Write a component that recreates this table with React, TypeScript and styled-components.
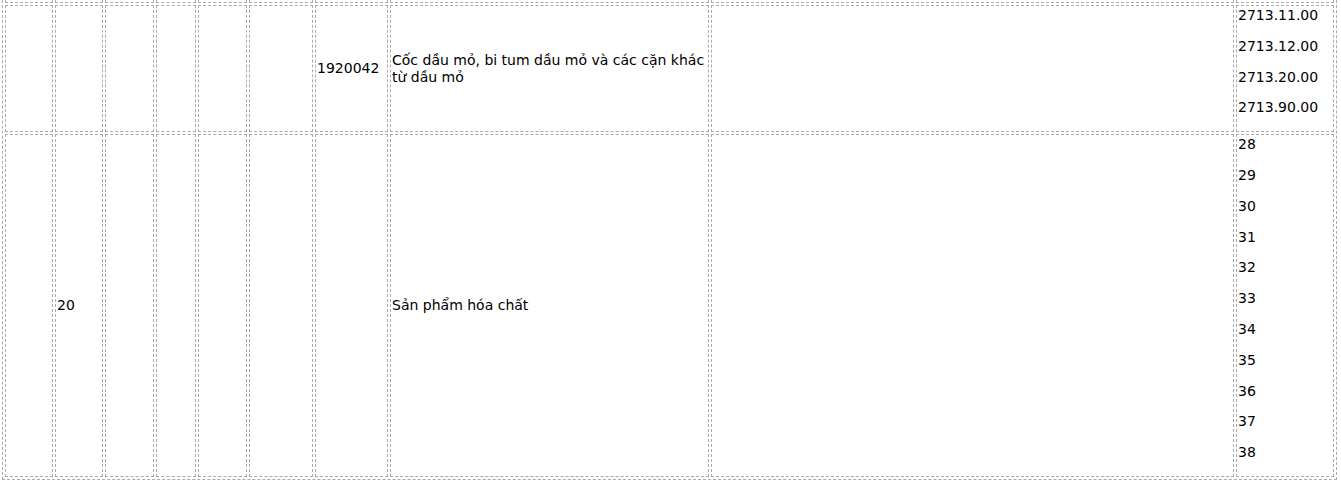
import React from "react";
import styled, { createGlobalStyle } from "styled-components";

const GlobalStyle = createGlobalStyle`
  html, body {
    margin: 0;
    padding: 0;
    background: #ffffff;
  }
  body {
    font-family: "DejaVu Sans", Verdana, sans-serif;
    font-size: 14px;
    color: #000000;
    overflow: hidden;
  }
`;

const Page = styled.div`
  padding-left: 2px;
`;

const Table = styled.table`
  width: 1335px;
  box-sizing: border-box;
  table-layout: fixed;
  border-collapse: separate;
  border-spacing: 2px;
  border: 1px dashed #aaaaaa;
  margin-top: -20px;
`;

const Col = styled.col<{ $w: number }>`
  width: ${(p) => p.$w}px;
`;

const Row = styled.tr``;

const Cell = styled.td<{ $spacer?: boolean }>`
  border: 1px dashed #aaaaaa;
  padding: 1px;
  vertical-align: middle;
  line-height: 17px;
  height: ${(p) => (p.$spacer ? "20px" : "auto")};
  box-sizing: border-box;
  overflow-wrap: break-word;
`;

const CodeItem = styled.p`
  margin: 0 0 13.8px 0;
  line-height: 17px;
`;

const widths = [48, 48, 49, 40, 49, 64, 73, 319, 523, 98];

type RowData = {
  cells: (string | null)[];
  codes: string[];
};

const rows: RowData[] = [
  {
    cells: [null, null, null, null, null, null, "1920042", "Cốc dầu mỏ, bi tum dầu mỏ và các cặn khác từ dầu mỏ", null],
    codes: ["2713.11.00", "2713.12.00", "2713.20.00", "2713.90.00"],
  },
  {
    cells: [null, "20", null, null, null, null, null, "Sản phẩm hóa chất", null],
    codes: ["28", "29", "30", "31", "32", "33", "34", "35", "36", "37", "38"],
  },
];

export default function App() {
  return (
    <>
      <GlobalStyle />
      <Page>
        <Table>
          <colgroup>
            {widths.map((w, i) => (
              <Col key={i} $w={w} />
            ))}
          </colgroup>
          <tbody>
            <Row>
              {widths.map((_, i) => (
                <Cell key={i} $spacer />
              ))}
            </Row>
            {rows.map((r, ri) => (
              <Row key={ri}>
                {r.cells.map((c, ci) => (
                  <Cell key={ci}>{c}</Cell>
                ))}
                <Cell>
                  {r.codes.map((code) => (
                    <CodeItem key={code}>{code}</CodeItem>
                  ))}
                </Cell>
              </Row>
            ))}
          </tbody>
        </Table>
      </Page>
    </>
  );
}
